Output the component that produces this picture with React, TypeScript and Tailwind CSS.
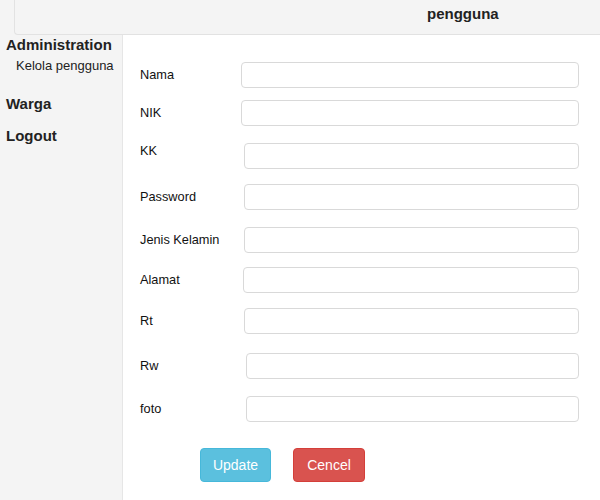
const fields = [
  { label: "Nama", gap: "mt-[27px]", left: "ml-[118px]", lift: "-translate-y-[1px]" },
  { label: "NIK", gap: "mt-[12px]", left: "ml-[118px]", lift: "-translate-y-[1px]" },
  { label: "KK", gap: "mt-[17px]", left: "ml-[121px]", lift: "-translate-y-[6px]" },
  { label: "Password", gap: "mt-[15px]", left: "ml-[121px]", lift: "-translate-y-[1px]" },
  { label: "Jenis Kelamin", gap: "mt-[17px]", left: "ml-[121px]", lift: "-translate-y-[1px]" },
  { label: "Alamat", gap: "mt-[14px]", left: "ml-[120px]", lift: "-translate-y-[1px]" },
  { label: "Rt", gap: "mt-[15px]", left: "ml-[121px]", lift: "-translate-y-[1px]" },
  { label: "Rw", gap: "mt-[19px]", left: "ml-[123px]", lift: "-translate-y-[1px]" },
  { label: "foto", gap: "mt-[17px]", left: "ml-[123px]", lift: "-translate-y-[1px]" },
];

export default function App() {
  return (
    <div className="flex h-[500px] w-[600px] flex-col overflow-hidden bg-[#f4f4f4] font-['Liberation_Sans',Arial,sans-serif] text-[#222]">
      <div className="pl-[14px]">
        <div className="h-[35px] rounded-bl-[4px] border-b border-l border-[#e2e2e2] bg-[#f4f4f4] pl-[412px] pt-[2px]">
          <span className="text-[15px] font-bold leading-[18px]">pengguna</span>
        </div>
      </div>

      <div className="flex flex-1">
        <aside className="w-[123px] shrink-0 border-r border-[#e6e6e6] pl-[6px] pt-[1px]">
          <p className="text-[15px] font-bold leading-[18px]">Administration</p>
          <p className="mt-[4px] pl-[10px] text-[13px] leading-[15px]">Kelola pengguna</p>
          <p className="mt-[22px] text-[15px] font-bold leading-[18px]">Warga</p>
          <p className="mt-[14px] text-[15px] font-bold leading-[18px]">Logout</p>
        </aside>

        <main className="flex-1 bg-white pr-[21px]">
          {fields.map((f) => (
            <div key={f.label} className={`relative flex items-center ${f.gap}`}>
              <span className={`absolute left-[17px] text-[12.75px] leading-[15px] text-[#111] ${f.lift}`}>
                {f.label}
              </span>
              <input
                type="text"
                className={`h-[26px] min-w-0 flex-1 rounded-[4px] border border-[#d9d9d9] bg-white ${f.left}`}
              />
            </div>
          ))}

          <div className="ml-[77px] mt-[26px] flex gap-[22px] font-['Liberation_Sans',Arial,sans-serif]">
            <button className="h-[34px] w-[71px] rounded-[4px] border border-[#46b8da] bg-[#5bc0de] text-[14px] text-white">
              Update
            </button>
            <button className="h-[34px] w-[72px] rounded-[4px] border border-[#d43f3a] bg-[#d9534f] text-[14px] text-white">
              Cencel
            </button>
          </div>
        </main>
      </div>
    </div>
  );
}
